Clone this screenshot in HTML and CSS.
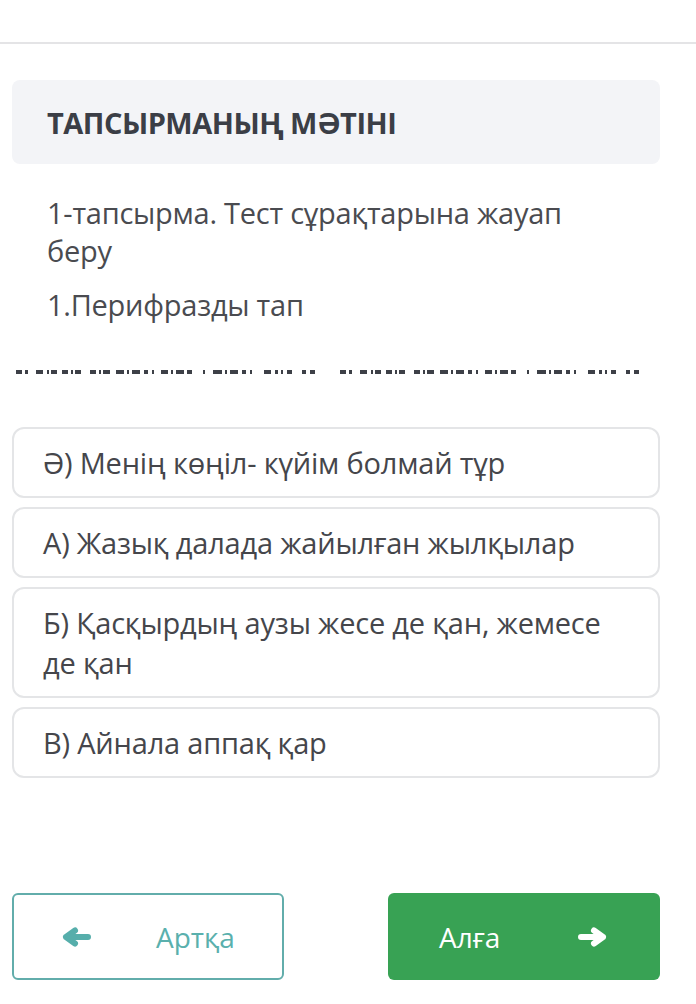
FILE: index.html
```html
<!DOCTYPE html>
<html lang="kk">
<head>
<meta charset="utf-8">
<link rel="stylesheet" href="styles.css">
</head>
<body>
<header class="topbar"></header>
<main class="page">
  <div class="title-card">
    <h1 class="title">ТАПСЫРМАНЫҢ МӘТІНІ</h1>
  </div>
  <div class="task">
    <p class="task-line">1-тапсырма. Тест сұрақтарына жауап беру</p>
    <p class="task-line">1.Перифразды тап</p>
  </div>
  <div class="glitch">
    <svg width="648" height="8" viewBox="0 0 648 8" aria-hidden="true">
      <defs>
        <g id="pat" fill="#3d4047">
          <rect x="0" y="0" width="6" height="4"/><rect x="9" y="0" width="3" height="4"/>
          <rect x="20" y="0" width="7" height="4"/><rect x="31" y="0" width="2" height="4"/>
          <rect x="35" y="0" width="6" height="4"/><rect x="46" y="0" width="6" height="4"/>
          <rect x="55" y="0" width="2" height="4"/><rect x="59" y="0" width="6" height="4"/>
          <rect x="74" y="0" width="6" height="4"/><rect x="83" y="0" width="2" height="4"/>
          <rect x="87" y="0" width="7" height="4"/><rect x="100" y="0" width="8" height="4"/>
          <rect x="111" y="0" width="2" height="4"/><rect x="116" y="0" width="8" height="4"/>
          <rect x="128" y="0" width="4" height="4"/><rect x="136" y="0" width="2" height="4"/>
          <rect x="145" y="0" width="7" height="4"/><rect x="155" y="0" width="2" height="4"/>
          <rect x="160" y="0" width="8" height="4"/><rect x="171" y="0" width="5" height="4"/>
          <rect x="187" y="0" width="2" height="4"/><rect x="197" y="0" width="9" height="4"/>
          <rect x="209" y="0" width="2" height="4"/><rect x="214" y="0" width="8" height="4"/>
          <rect x="226" y="0" width="4" height="4"/><rect x="234" y="0" width="2" height="4"/>
          <rect x="248" y="0" width="7" height="4"/><rect x="259" y="0" width="3" height="4"/>
          <rect x="265" y="0" width="2" height="4"/><rect x="271" y="0" width="5" height="4"/>
          <rect x="286" y="0" width="4" height="4"/><rect x="294" y="0" width="5" height="4"/>
        </g>
      </defs>
      <use href="#pat" x="4" y="2"/>
      <use href="#pat" x="328" y="2"/>
    </svg>
  </div>
  <ul class="options">
    <li class="option">Ә) Менің көңіл- күйім болмай тұр</li>
    <li class="option">А) Жазық далада жайылған жылқылар</li>
    <li class="option">Б) Қасқырдың аузы жесе де қан, жемесе де қан</li>
    <li class="option">В) Айнала аппақ қар</li>
  </ul>
  <nav class="nav">
    <button class="btn btn-back">
      <svg class="arrow" width="30" height="20" viewBox="0 0 30 20" aria-hidden="true"><path d="M13 3.5 L4 10 L13 16.5 M4 10 H26"/></svg>
      <span class="btn-label">Артқа</span>
    </button>
    <button class="btn btn-next">
      <span class="btn-label">Алға</span>
      <svg class="arrow" width="30" height="20" viewBox="0 0 30 20" aria-hidden="true"><path d="M17 3.5 L26 10 L17 16.5 M4 10 H26"/></svg>
    </button>
  </nav>
</main>
</body>
</html>
```

FILE: styles.css
```css
* { box-sizing: border-box; }
html, body { margin: 0; padding: 0; background: #ffffff; }
body {
  font-family: "Open Sans", "Noto Sans", sans-serif;
  color: #4a4b4f;
  width: 696px;
  height: 1004px;
  overflow: hidden;
}
.topbar {
  height: 44px;
  border-bottom: 2px solid #e4e4e6;
  background: #fff;
}
.page {
  padding: 36px 36px 0 12px;
}
.title-card {
  height: 84px;
  background: #f3f4f7;
  border-radius: 8px;
  display: flex;
  align-items: center;
  padding-left: 35px;
}
.title {
  margin: 0;
  font-size: 29px;
  font-weight: 700;
  color: #3b3e46;
  letter-spacing: -0.5px;
  line-height: 1;
}
.task {
  padding: 30px 0 0 35px;
}
.task-line {
  margin: 0 0 16px;
  font-size: 29px;
  letter-spacing: -0.25px;
  line-height: 38px;
  color: #4a4b50;
  max-width: 560px;
}
.glitch {
  margin-top: 44px;
  height: 8px;
  display: flex;
}
.glitch svg { display: block; }
.options {
  list-style: none;
  margin: 51px 0 0;
  padding: 0;
  display: flex;
  flex-direction: column;
  gap: 9px;
}
.option {
  border: 2px solid #e4e5e7;
  border-radius: 12px;
  padding: 13.5px 40px 13.5px 29px;
  font-size: 29px;
  letter-spacing: -0.2px;
  line-height: 40px;
  color: #45464b;
}
.nav {
  margin-top: 115px;
  display: flex;
  justify-content: space-between;
}
.btn {
  width: 272px;
  height: 87px;
  border-radius: 6px;
  font-family: "Open Sans", "Noto Sans", sans-serif;
  font-size: 28px;
  display: flex;
  align-items: center;
  padding: 0;
  cursor: pointer;
}
.arrow path {
  fill: none;
  stroke-width: 6;
  stroke-linecap: round;
  stroke-linejoin: round;
}
.btn-back {
  background: #fff;
  border: 2px solid #62adab;
  color: #5ab0ad;
  padding-left: 48px;
}
.btn-back .arrow path { stroke: #56aeab; }
.btn-back .btn-label { margin-left: 64px; }
.btn-next {
  background: #38a254;
  border: none;
  color: #fff;
  padding-left: 51px;
}
.btn-next .arrow { margin-left: 77px; }
.btn-next .arrow path { stroke: #fff; }
```
